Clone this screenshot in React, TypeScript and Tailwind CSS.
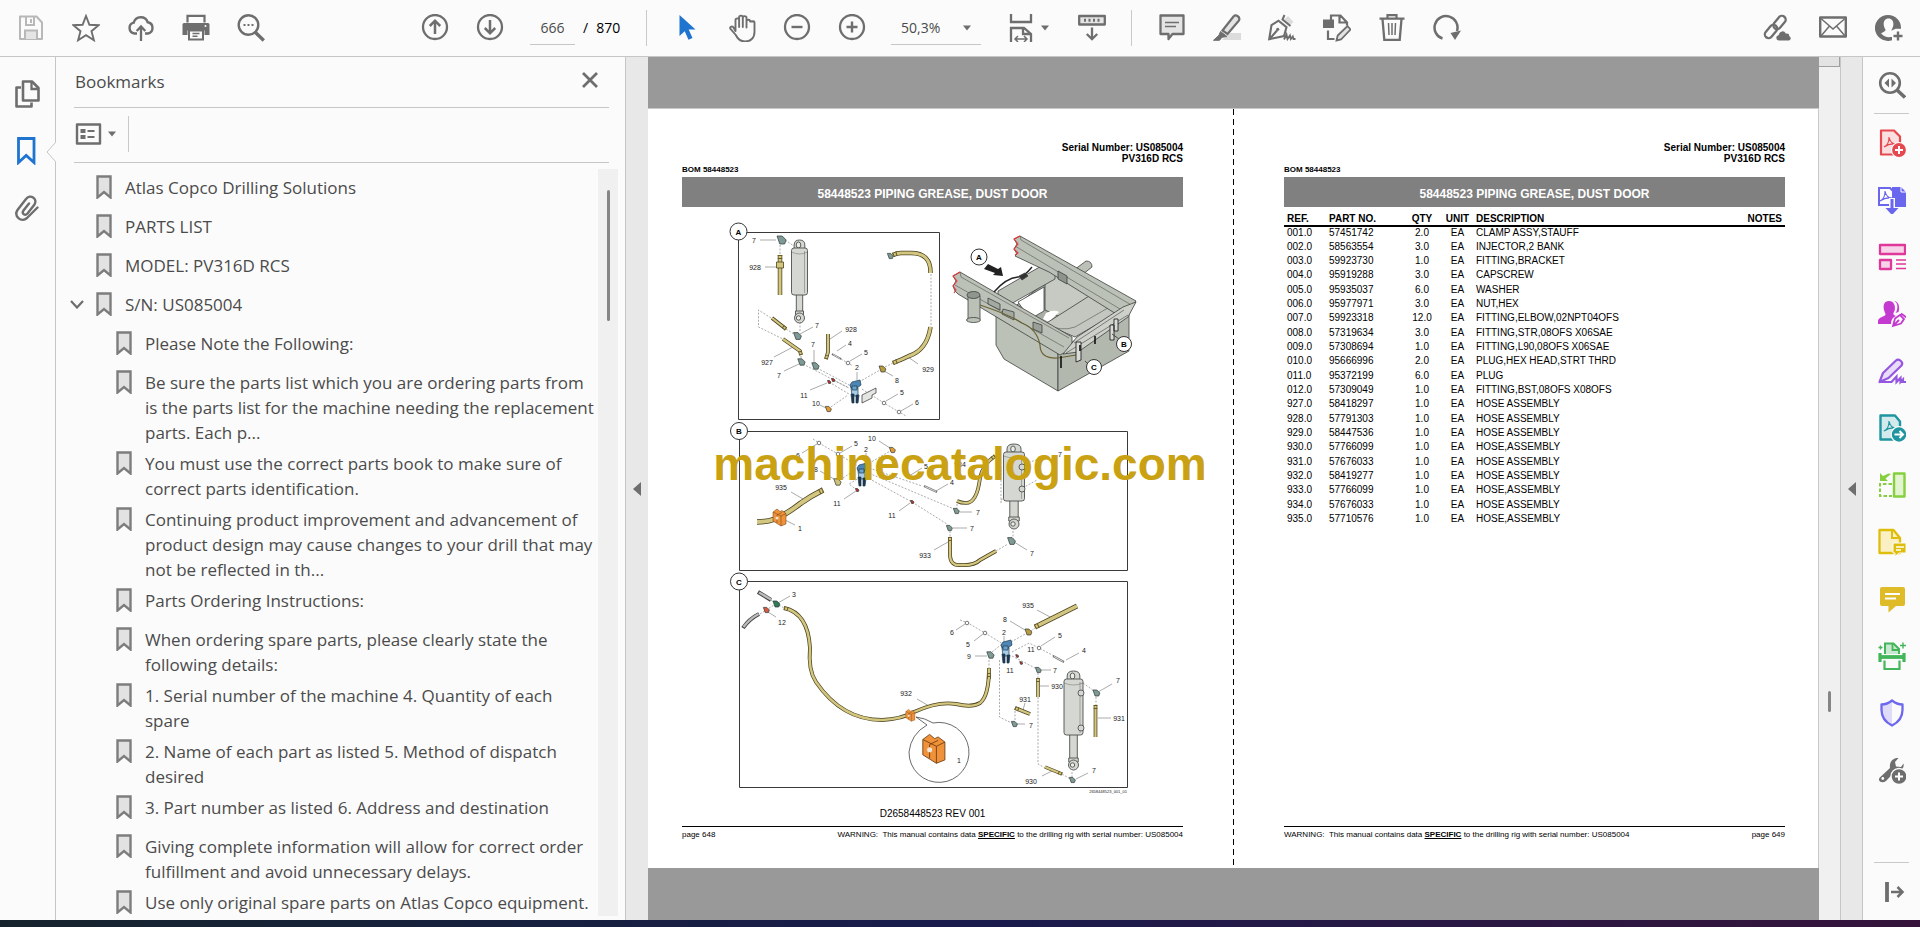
import type { ReactNode } from 'react';
import clsx from 'clsx';

const parts = [
  ['001.0', '57451742', '2.0', 'CLAMP ASSY,STAUFF'],
  ['002.0', '58563554', '3.0', 'INJECTOR,2 BANK'],
  ['003.0', '59923730', '1.0', 'FITTING,BRACKET'],
  ['004.0', '95919288', '3.0', 'CAPSCREW'],
  ['005.0', '95935037', '6.0', 'WASHER'],
  ['006.0', '95977971', '3.0', 'NUT,HEX'],
  ['007.0', '59923318', '12.0', 'FITTING,ELBOW,02NPT04OFS'],
  ['008.0', '57319634', '3.0', 'FITTING,STR,08OFS X06SAE'],
  ['009.0', '57308694', '1.0', 'FITTING,L90,08OFS X06SAE'],
  ['010.0', '95666996', '2.0', 'PLUG,HEX HEAD,STRT THRD'],
  ['011.0', '95372199', '6.0', 'PLUG'],
  ['012.0', '57309049', '1.0', 'FITTING,BST,08OFS X08OFS'],
  ['927.0', '58418297', '1.0', 'HOSE ASSEMBLY'],
  ['928.0', '57791303', '1.0', 'HOSE ASSEMBLY'],
  ['929.0', '58447536', '1.0', 'HOSE ASSEMBLY'],
  ['930.0', '57766099', '1.0', 'HOSE,ASSEMBLY'],
  ['931.0', '57676033', '1.0', 'HOSE ASSEMBLY'],
  ['932.0', '58419277', '1.0', 'HOSE ASSEMBLY'],
  ['933.0', '57766099', '1.0', 'HOSE,ASSEMBLY'],
  ['934.0', '57676033', '1.0', 'HOSE ASSEMBLY'],
  ['935.0', '57710576', '1.0', 'HOSE,ASSEMBLY'],
];

type Bookmark = { text: string; level: 0 | 1; open?: boolean };

const bookmarks: Bookmark[] = [
  { text: 'Atlas Copco Drilling Solutions', level: 0 },
  { text: 'PARTS LIST', level: 0 },
  { text: 'MODEL: PV316D RCS', level: 0 },
  { text: 'S/N: US085004', level: 0, open: true },
  { text: 'Please Note the Following:', level: 1 },
  { text: 'Be sure the parts list which you are ordering parts from is the parts list for the machine needing the replacement parts. Each p...', level: 1 },
  { text: 'You must use the correct parts book to make sure of correct parts identification.', level: 1 },
  { text: 'Continuing product improvement and advancement of product design may cause changes to your drill that may not be reflected in th...', level: 1 },
  { text: 'Parts Ordering Instructions:', level: 1 },
  { text: 'When ordering spare parts, please clearly state the following details:', level: 1 },
  { text: '1. Serial number of the machine 4. Quantity of each spare', level: 1 },
  { text: '2. Name of each part as listed 5. Method of dispatch desired', level: 1 },
  { text: '3. Part number as listed 6. Address and destination', level: 1 },
  { text: 'Giving complete information will allow for correct order fulfillment and avoid unnecessary delays.', level: 1 },
  { text: 'Use only original spare parts on Atlas Copco equipment.', level: 1 },
];

/* ---------- icons ---------- */

function Icon({ children, className }: { children: ReactNode; className?: string }) {
  return (
    <svg viewBox="0 0 28 28" className={clsx('size-7 shrink-0', className)} fill="none" stroke="currentColor" strokeWidth="2" aria-hidden="true">
      {children}
    </svg>
  );
}

const Caret = () => (
  <svg viewBox="0 0 8 6" className="h-1.5 w-2 shrink-0" aria-hidden="true">
    <path d="M0 .5h8L4 5.5z" fill="#6e6e6e" />
  </svg>
);

const SaveIcon = () => (
  <Icon className="text-[#b8b8b8]">
    <path d="M3 2.500h16.500l5.500 6v16.500H3z" strokeLinejoin="round" />
    <path d="M9 3v8h8V3M14 5v4" />
    <path d="M8 25v-8.500h12V25" fill="#e4e4e4" />
  </Icon>
);
const StarIcon = () => (
  <Icon>
    <path d="M14 2l3.400 8.800 9.300.4-7.200 6 2.400 9-7.900-5-7.900 5 2.400-9-7.200-6 9.300-.4z" strokeWidth="1.900" strokeLinejoin="miter" />
  </Icon>
);
const CloudIcon = () => (
  <Icon>
    <path d="M10 19.500H7.500a5.500 5.500 0 0 1-.8-10.800A7.300 7.300 0 0 1 20.700 8.300a5.700 5.700 0 0 1 .3 11.200h-3" strokeWidth="2.400" />
    <path d="M14 27V12.500M9.700 17l4.300-4.500 4.300 4.500" strokeWidth="2.300" />
  </Icon>
);
const PrintIcon = () => (
  <Icon>
    <path d="M5.500 8.500V1.800h17v6.700" strokeWidth="2.200" />
    <path d="M2 9h24a1.500 1.500 0 0 1 1.500 1.500V21h-5v-4.500h-17V21h-5V10.500A1.500 1.500 0 0 1 2 9z" fill="currentColor" stroke="none" />
    <path d="M7 16.500h14v9H7z" />
    <path d="M10.500 19.500h7M10.500 22.300h5" strokeWidth="1.400" />
    <circle cx="23.500" cy="12" r="1" fill="#fff" stroke="none" />
  </Icon>
);
const FindIcon = () => (
  <Icon>
    <circle cx="11.500" cy="11" r="9.800" strokeWidth="2.400" />
    <path d="M18.500 18.500l8.300 8" strokeWidth="3.400" />
    <path d="M6.500 11h2M10.500 11h2M14.500 11h2" strokeWidth="2.200" />
  </Icon>
);
const UpIcon = () => (
  <Icon>
    <circle cx="14" cy="13" r="12" strokeWidth="2.300" />
    <path d="M14 20V7M8.800 12L14 6.700l5.200 5.300" strokeWidth="2.500" />
  </Icon>
);
const DownIcon = () => (
  <Icon>
    <circle cx="14" cy="13" r="12" strokeWidth="2.300" />
    <path d="M14 6v13M8.800 14l5.200 5.300 5.200-5.300" strokeWidth="2.500" />
  </Icon>
);
const CursorIcon = () => (
  <Icon className="text-[#1f74cf]">
    <path d="M6.500 1v21l5.200-4.800 3.800 8.600 4-1.700-3.800-8.500h6.800z" fill="currentColor" stroke="none" />
  </Icon>
);
const HandIcon = () => (
  <Icon>
    <path d="M7.500 17V6.200a1.800 1.800 0 0 1 3.600 0V13 3.500a1.800 1.800 0 0 1 3.700 0V13 4a1.800 1.800 0 0 1 3.700 0v9.500-6a1.800 1.800 0 0 1 3.600 0l3.200-.3c.8 0 1.200.8 1.200 1.800v9c0 6-4 9.500-9.500 9.500-5.500 0-7.500-3-9.200-6.500L2.300 14.700c-.7-1.700 1.500-3 2.900-1.600z" strokeWidth="1.900" strokeLinejoin="round" />
  </Icon>
);
const MinusIcon = () => (
  <Icon>
    <circle cx="14" cy="13" r="12" strokeWidth="2.300" />
    <path d="M8.500 13h11" strokeWidth="2.400" />
  </Icon>
);
const PlusIcon = () => (
  <Icon>
    <circle cx="14" cy="13" r="12" strokeWidth="2.300" />
    <path d="M8.500 13h11M14 7.500v11" strokeWidth="2.400" />
  </Icon>
);
const FitIcon = () => (
  <Icon>
    <path d="M4 0v8h20V0" strokeWidth="2.300" />
    <path d="M4 28V14h13l7 6v8M16 14v6h7" strokeWidth="2.300" />
    <path d="M8 25h12M11 22l-3 3 3 3M17 22l3 3-3 3" strokeWidth="1.500" />
  </Icon>
);
const ScrollIcon = () => (
  <Icon>
    <path d="M1.200 2h25.600v8.500H1.200z" strokeWidth="2.300" strokeLinejoin="round" fill="#e4e4e4" />
    <path d="M6 6.200h2M10.500 6.200h2M15 6.200h2M19.500 6.200h2" strokeWidth="3" />
    <path d="M14 13.500v12M8.800 20l5.200 5.200 5.200-5.200" strokeWidth="2.300" />
  </Icon>
);
const CommentIcon = () => (
  <Icon>
    <path d="M2.500 1.500h23v18.500H14.500l-4 5v-5h-8z" fill="#e4e4e4" strokeWidth="2.300" strokeLinejoin="round" />
    <path d="M7 8.500h14M7 12.500h11" strokeWidth="1.500" />
  </Icon>
);
const HighlightIcon = () => (
  <Icon>
    <path d="M10 25l7-6h11v7H9z" fill="#dcdcdc" stroke="none" />
    <path d="M9.500 16.500L20.500 2.500c2.500-2.500 7 .5 5.500 4L14.500 20z" fill="#e4e4e4" strokeWidth="2.200" />
    <path d="M7.500 17.500l6.500 5-5 .8-2.500 3H.5l5.500-5z" fill="currentColor" strokeWidth="1" />
  </Icon>
);
const SignIcon = () => (
  <Icon>
    <path d="M15.500 6.500l4.500-4.500 5.500 6-4 3.500z" fill="#dcdcdc" stroke="none" />
    <path d="M16.500 1l-2 4.500 8 6.500" />
    <path d="M1.200 25.200l2.300-14 7-4.500 8 6.500-2.500 8.800zM2 24.500l7-8" strokeWidth="2.100" />
    <circle cx="9.700" cy="15.300" r="1.600" fill="currentColor" stroke="none" />
    <path d="M16 25.500l2.500-5 1 4.500 2.500-3.500.8 3.500 2-2.500.7 2.500h2" strokeWidth="1.800" />
  </Icon>
);
const EditIcon = () => (
  <Icon>
    <path d="M8 6V1.500h9.500l6.500 7v3M16.500 2v6.500H24" strokeWidth="2.200" />
    <path d="M0 5.500h11v8.500H0z" fill="currentColor" stroke="none" />
    <path d="M5 16.500V25h6.500" strokeWidth="2.200" />
    <path d="M13.500 26.500l1.200-5L24.500 12l3 3.500L18 25.500z" fill="#e4e4e4" strokeWidth="1.800" />
  </Icon>
);
const TrashIcon = () => (
  <Icon>
    <path d="M1.500 4.700h25M9.500 4.500V1.200h9v3.300" strokeWidth="2.200" />
    <path d="M4.500 5l1.800 20.800h15.400L23.500 5" strokeWidth="2.300" />
    <path d="M10.500 9l.5 12M14 9v12M17.500 9l-.5 12" strokeWidth="1.500" />
  </Icon>
);
const RotateIcon = () => (
  <Icon>
    <path d="M9.500 24.500A11.500 11.500 0 1 1 24 17" strokeWidth="2.500" />
    <path d="M17.500 19l10.500-2.500L22 26z" fill="currentColor" stroke="none" />
  </Icon>
);
const LinkCloudIcon = () => (
  <Icon>
    <rect x="-7.500" y="-3.800" width="15" height="7.600" rx="3.800" transform="translate(16.500 8.500) rotate(-50)" strokeWidth="2.300" />
    <rect x="-7.500" y="-3.800" width="15" height="7.600" rx="3.800" transform="translate(8 17.500) rotate(-50)" strokeWidth="2.300" />
    <path d="M15.500 27a3.200 3.200 0 0 1-.3-6.300c.8-4.500 6.300-5.200 8-1.700 2.500-.5 3.800 1 3.500 2.700 2.400 1 2 5.300-.8 5.300z" fill="currentColor" stroke="#fbfbfb" strokeWidth="1.200" />
  </Icon>
);
const MailIcon = () => (
  <Icon>
    <path d="M1.200 3.500h25.600v19H1.200z" strokeWidth="2.400" strokeLinejoin="round" />
    <path d="M2 4.500l12 10.500L26 4.500M2 22l8.500-10M26 22l-8.500-10" strokeWidth="1.500" />
  </Icon>
);
const UserIcon = () => (
  <Icon>
    <path fillRule="evenodd" d="M13 1a13 13 0 1 0 6 24.500v-2.500h-3l-5-4v-2h6c0-1 1.500-1.200 3.500-2.200H26A13 13 0 0 0 13 1z" fill="currentColor" stroke="none" />
    <path d="M13.500 4.500c-3.300 0-5 2.500-4.800 6 .2 2.500 1.200 4 1.800 5 .2 1.500-1 2.200-4.500 3.700 3.800 5 11.200 5 13 1.500v-1.500c-2-1-2.500-2-2.300-3.700.8-1.200 1.600-3 1.700-5 .2-3.500-1.700-6-4.900-6z" fill="#fbfbfb" stroke="none" />
    <path d="M17 17h11v11H17z" fill="#fbfbfb" stroke="none" />
    <path d="M18.500 22h9M23 17.500v9" strokeWidth="2.400" />
  </Icon>
);

const PagesIcon = () => (
  <Icon>
    <path d="M9 1.500h9l6.500 6.500v12.500H9z" strokeWidth="2.600" strokeLinejoin="round" />
    <path d="M17.500 2v7h7" strokeWidth="2.300" />
    <path d="M7 7.500H2.500v19h15V22.500" strokeWidth="2.600" strokeLinejoin="round" />
  </Icon>
);
const RibbonIcon = () => (
  <Icon className="text-[#1f74cf]">
    <path d="M4.500 1.500h15.500v24l-7.800-7-7.700 7z" strokeWidth="2.800" />
  </Icon>
);
const ClipIcon = () => (
  <Icon>
    <path d="M23.500 13.500L13 24c-5.500 5-13.500-1.500-9.500-8L12 5c4-5.500 12-.5 8.500 5.500l-7 9c-2.500 2.800-6 .2-4.200-2.700l5.700-7.300" strokeWidth="2.400" strokeLinecap="round" />
  </Icon>
);

const PdfSwirl = ({ x, y }: { x: number; y: number }) => (
  <path transform={`translate(${x} ${y})`} d="M0 11c3.500-1.500 5.200-6 5-10 1 5 3.500 7 7 7-4.500-.5-8.500.5-12 3z" strokeWidth="1.200" />
);

const tools: { label: string; icon: ReactNode }[] = [
  {
    label: 'Create PDF',
    icon: (
      <Icon className="text-[#e5484f]">
        <path d="M3 1.500h13l6 6v18H3z" fill="#fbdfe0" strokeWidth="2.200" strokeLinejoin="round" />
        <PdfSwirl x={6} y={7} />
        <circle cx="21" cy="21" r="7.500" fill="currentColor" stroke="#fbfbfb" strokeWidth="1.200" />
        <path d="M17 21h8M21 17v8" stroke="#fff" />
      </Icon>
    ),
  },
  {
    label: 'Combine Files',
    icon: (
      <Icon className="text-[#6a66ee]">
        <path d="M14 1h9l5 5v15H14z" fill="currentColor" stroke="none" />
        <path d="M23 1v5h5" stroke="#fff" strokeWidth="1" />
        <path d="M1 2h11l3 3v14H1z" fill="#fff" />
        <PdfSwirl x={2} y={4} />
        <path d="M14 12v12" stroke="#fbfbfb" strokeWidth="6" />
        <path d="M14 13v11" strokeWidth="3" />
        <path d="M7.500 22h13L14 29z" fill="currentColor" stroke="none" />
      </Icon>
    ),
  },
  {
    label: 'Organize Pages',
    icon: (
      <Icon className="text-[#e0389a]">
        <path d="M2 2h25v9H2zM2 17h11v9H2z" fill="#f6d3e8" strokeWidth="2.300" strokeLinejoin="round" />
        <path d="M18 17h10M18 21h10M18 25.500h10" strokeWidth="1.400" />
      </Icon>
    ),
  },
  {
    label: 'Request Signatures',
    icon: (
      <Icon className="text-[#c43ad0]">
        <path d="M11 1c-5 0-6 4-5 9 .5 2 1.500 3 1.500 4.500C7 17 0 17 0 21v3h13c0-4 1.500-6.500 5-8-3-1-3.200-2.500-1.500-5C18 6 16 1 11 1z" fill="currentColor" stroke="none" />
        <path d="M16 1c4 1 4.500 8 1.500 12l3-1c1.500-4 .5-11-4.500-11z" fill="currentColor" stroke="none" />
        <path d="M15 26l2-7.500 5-3.500 4 4-3 4.500zM15 26l6-6M23 13.500l5.500 4" fill="#fbfbfb" strokeWidth="1.800" />
      </Icon>
    ),
  },
  {
    label: 'Fill and Sign',
    icon: (
      <Icon className="text-[#9657e0]">
        <path d="M1.500 25l3.500-9L18 3.500c2.500-2.500 8 1.500 5.500 5L10.500 21z" fill="#e9dcf8" strokeWidth="2.200" strokeLinejoin="round" />
        <path d="M1.500 25h12l5-5.500v5.500l4-4v4l2.500-2.500v2.500h3" strokeWidth="2.200" />
      </Icon>
    ),
  },
  {
    label: 'Export PDF',
    icon: (
      <Icon className="text-[#1f95a0]">
        <path d="M2.500 1.500h14.500l5 6v18H2.500z" fill="#d2eaec" strokeWidth="2.400" strokeLinejoin="round" />
        <PdfSwirl x={6} y={6} />
        <circle cx="21" cy="20.500" r="7.800" fill="currentColor" stroke="#fbfbfb" strokeWidth="1.200" />
        <path d="M16.500 20.500h8M21.500 17l3.500 3.500-3.500 3.500" stroke="#fff" />
      </Icon>
    ),
  },
  {
    label: 'Compare Files',
    icon: (
      <Icon className="text-[#86cf3f]">
        <path d="M16 2.500h10.500v23H16z" fill="#e2f4d0" strokeWidth="2.400" strokeLinejoin="round" />
        <path d="M14 13H2v12h12" strokeDasharray="3.500 2" />
        <path d="M2 2v8h8L7.500 7.500 13 3l-2.500-.5L5 5z" fill="currentColor" stroke="none" />
      </Icon>
    ),
  },
  {
    label: 'Review',
    icon: (
      <Icon className="text-[#dfbd0b]">
        <path d="M1.500 2h14l6.500 8v15H1.500z" fill="#faf0c4" strokeWidth="2.300" strokeLinejoin="round" />
        <path d="M14 2v8h7" />
        <path d="M15 15h13v10h-7l-4 3.500V25h-2z" fill="currentColor" stroke="#fbfbfb" strokeWidth="1" />
        <path d="M18 19h8M18 22h5" stroke="#fff" strokeWidth="1.300" />
      </Icon>
    ),
  },
  {
    label: 'Comment',
    icon: (
      <Icon className="text-[#e0bb28]">
        <path d="M4 2h21a2 2 0 0 1 2 2v15a2 2 0 0 1-2 2h-7l-7.500 6.500V21H4a2 2 0 0 1-2-2V4a2 2 0 0 1 2-2z" fill="currentColor" stroke="none" />
        <path d="M7 9h15M7 13.500h11" stroke="#fff" strokeWidth="1.800" />
      </Icon>
    ),
  },
  {
    label: 'Scan and OCR',
    icon: (
      <Icon className="text-[#43b55a]">
        <path d="M7 12V1.500h8.500L21 7v5" fill="#c8e8d0" strokeWidth="2" />
        <path d="M14.500 1.500V8H21" strokeWidth="1.800" />
        <path d="M2 11v9M26 11v9" strokeWidth="3.200" />
        <path d="M1 15h26" strokeWidth="3.800" />
        <path d="M6.500 18.500V27h15v-8.500" strokeWidth="2.200" />
        <path d="M25 .5v6M22 3.500h6M2.500 3.500v4M.5 5.500h4" strokeWidth="1.400" />
      </Icon>
    ),
  },
  {
    label: 'Protect',
    icon: (
      <Icon className="text-[#6d68ee]">
        <path d="M14 1.500v24.500C7 23 3.500 18 3.500 11V5.500C8 5.500 11 4 14 1.500z" fill="#dedcf8" stroke="none" />
        <path d="M14 1.500c3 2.500 6 4 10.500 4V11c0 7-3.500 12-10.500 15.500C7 23 3.500 18 3.500 11V5.500C8 5.500 11 4 14 1.500z" strokeWidth="2.300" strokeLinejoin="round" />
      </Icon>
    ),
  },
  {
    label: 'More Tools',
    icon: (
      <Icon>
        <path d="M1.800 21.500L12 12c-1-6 3-10.500 8.500-10L17 6l1 4.500 5 .5 2.500-3.500c1 5-3 8.500-8.500 8l-9 9.500c-4.500 3-9-.5-6.200-3.500z" fill="currentColor" stroke="none" />
        <circle cx="4.800" cy="22.500" r="1.400" fill="#fff" stroke="none" />
        <circle cx="21" cy="20.500" r="8" fill="currentColor" stroke="#fbfbfb" strokeWidth="1.400" />
        <path d="M17 20.500h8M21 16.500v8" stroke="#fff" />
      </Icon>
    ),
  },
];

/* ---------- toolbar ---------- */

function ToolButton({ label, children }: { label: string; children: ReactNode }) {
  return (
    <button type="button" aria-label={label} className="flex h-11 w-[55px] items-center justify-center">
      {children}
    </button>
  );
}

const Divider = () => <div className="h-9 w-px bg-[#c9c9c9]" />;

function Toolbar() {
  return (
    <header className="flex h-[57px] shrink-0 items-center border-b border-[#c6c6c6] bg-[#fbfbfb] pl-[3px] pr-1 text-[#6e6e6e]">
      <div className="flex">
        <ToolButton label="Save"><SaveIcon /></ToolButton>
        <ToolButton label="Star"><StarIcon /></ToolButton>
        <ToolButton label="Upload"><CloudIcon /></ToolButton>
        <ToolButton label="Print"><PrintIcon /></ToolButton>
        <ToolButton label="Find"><FindIcon /></ToolButton>
      </div>

      <div className="ml-[129px] flex items-center">
        <ToolButton label="Previous page"><UpIcon /></ToolButton>
        <ToolButton label="Next page"><DownIcon /></ToolButton>
        <input
          aria-label="Page number"
          defaultValue="666"
          className="ml-[13px] h-[34px] w-[45px] border-b border-[#c6c6c6] bg-transparent text-center text-sm text-[#4b4b4b] outline-none"
        />
        <span className="ml-2 flex w-[63px] gap-2 text-sm text-black">
          <span>/</span>
          <span>870</span>
        </span>
      </div>
      <Divider />

      <div className="ml-3 flex items-center">
        <ToolButton label="Select"><CursorIcon /></ToolButton>
        <ToolButton label="Pan"><HandIcon /></ToolButton>
        <ToolButton label="Zoom out"><MinusIcon /></ToolButton>
        <ToolButton label="Zoom in"><PlusIcon /></ToolButton>
        <div className="ml-3 flex w-[90px] items-center border-b border-[#c6c6c6] pr-2.5">
          <select aria-label="Zoom level" className="h-[33px] flex-1 appearance-none bg-transparent pl-2.5 text-sm text-[#4b4b4b] outline-none">
            <option>50,3%</option>
          </select>
          <Caret />
        </div>
        <button type="button" aria-label="Page fit" className="ml-[26px] flex w-[45px] items-center gap-1.5">
          <FitIcon />
          <Caret />
        </button>
        <div className="ml-3">
          <ToolButton label="Scrolling"><ScrollIcon /></ToolButton>
        </div>
      </div>

      <div className="ml-3 flex items-center gap-3">
        <Divider />
        <div className="flex">
          <ToolButton label="Comment"><CommentIcon /></ToolButton>
          <ToolButton label="Highlight"><HighlightIcon /></ToolButton>
          <ToolButton label="Sign"><SignIcon /></ToolButton>
          <ToolButton label="Edit"><EditIcon /></ToolButton>
          <ToolButton label="Delete"><TrashIcon /></ToolButton>
          <ToolButton label="Rotate"><RotateIcon /></ToolButton>
        </div>
      </div>

      <div className="ml-auto flex gap-px">
        <ToolButton label="Share link"><LinkCloudIcon /></ToolButton>
        <ToolButton label="Send by email"><MailIcon /></ToolButton>
        <ToolButton label="Account"><UserIcon /></ToolButton>
      </div>
    </header>
  );
}

/* ---------- left side ---------- */

function LeftRail() {
  return (
    <nav className="relative flex w-14 shrink-0 flex-col border-r border-[#c6c6c6] bg-[#fbfbfb] pt-2 text-[#6e6e6e]">
      {[
        ['Pages', <PagesIcon />],
        ['Bookmarks', <RibbonIcon />],
        ['Attachments', <ClipIcon />],
      ].map(([label, icon]) => (
        <button key={label as string} type="button" aria-label={label as string} className="flex h-[57px] w-full items-center justify-center">
          {icon}
        </button>
      ))}
      {/* pointer towards the open panel */}
      <svg viewBox="0 0 10 20" className="absolute -right-px top-[85px] h-5 w-2.5" aria-hidden="true">
        <path d="M10 0L1 10l9 10z" fill="#fbfbfb" />
        <path d="M9.500 0v.5L1 10l8.500 9.500v.5" fill="none" stroke="#c6c6c6" />
      </svg>
    </nav>
  );
}

function BookmarkRow({ item }: { item: Bookmark }) {
  return (
    <li className={clsx('flex min-h-[39px] pb-1.5', item.level === 1 && 'pl-5')}>
      <span className="flex w-10 items-center self-start pt-2 pl-3.5">
        {item.open && (
          <svg viewBox="0 0 14 9" className="h-[9px] w-3.5" fill="none" stroke="#6e6e6e" strokeWidth="2.200" aria-hidden="true">
            <path d="M1 1l6 6.500L13 1" />
          </svg>
        )}
      </span>
      <svg viewBox="0 0 16 24" className="h-6 w-4 shrink-0" aria-hidden="true">
        <path d="M1.500 1.500h13v21L8 17l-6.500 5.500z" fill="#e2e2e2" stroke="#7d7d7d" strokeWidth="2.400" />
      </svg>
      <a href="#" className="ml-[13px] min-w-0 flex-1 text-[17px] leading-[25px] text-[#4b4b4b]">
        {item.text}
      </a>
    </li>
  );
}

function BookmarksPanel() {
  return (
    <aside className="flex w-[570px] shrink-0 flex-col border-r border-[#c6c6c6] bg-[#fbfbfb]">
      <div className="ml-[18px] mr-4 flex h-[51px] shrink-0 items-center justify-between border-b border-[#c6c6c6] pr-2.5 pl-px">
        <h2 className="text-[17px] text-[#4b4b4b]">Bookmarks</h2>
        <button type="button" aria-label="Close panel" className="pb-1">
          <svg viewBox="0 0 18 18" className="size-[18px]" stroke="#6e6e6e" strokeWidth="2.800" aria-hidden="true">
            <path d="M2 2l14 14M16 2L2 16" />
          </svg>
        </button>
      </div>
      <div className="ml-[18px] mr-4 flex h-[55px] shrink-0 items-center border-b border-[#c6c6c6] pb-0.5">
        <button type="button" aria-label="Options" className="flex items-center gap-1.5 pr-3">
          <svg viewBox="0 0 28 24" className="h-6 w-7" fill="none" stroke="#6e6e6e" strokeWidth="2.400" aria-hidden="true">
            <path d="M3 2.500h23v19H3z" strokeLinejoin="round" />
            <path d="M13.500 9h7M13.500 15h7" strokeWidth="2" />
            <path d="M6.500 9h5M6.500 15h5" strokeWidth="4" />
          </svg>
          <Caret />
        </button>
        <Divider />
      </div>
      <div className="flex min-h-0 flex-1 pt-1.5 pb-1">
        <ul className="min-w-0 flex-1 overflow-hidden pt-1.5">
          {bookmarks.map((item) => (
            <BookmarkRow key={item.text} item={item} />
          ))}
        </ul>
        <div className="mr-[7px] w-5 shrink-0 bg-[#f0f0f0] pt-[21px]">
          <div className="mx-auto h-[131px] w-[3px] rounded-full bg-[#858585]" />
        </div>
      </div>
    </aside>
  );
}

function CollapseStrip({ label, className }: { label: string; className?: string }) {
  return (
    <button type="button" aria-label={label} className={clsx('flex w-[22px] shrink-0 items-center justify-center bg-[#e8e8e8]', className)}>
      <svg viewBox="0 0 8 14" className="h-3.5 w-2" aria-hidden="true">
        <path d="M8 0v14L0 7z" fill="#6e6e6e" />
      </svg>
    </button>
  );
}

/* ---------- drawing ---------- */

function Hose({ d, w = 3, end }: { d: string; w?: number; end?: boolean }) {
  return (
    <g fill="none" strokeLinejoin="round">
      <path d={d} stroke="#4a421c" strokeWidth={w + 1.5} />
      <path d={d} stroke="#d3c680" strokeWidth={w} />
      {end && <path d={d} stroke="#6b5c22" strokeWidth={w + 1.5} strokeDasharray="1 2 1 300" />}
    </g>
  );
}

function Cylinder({ x, y, w, body, rod }: { x: number; y: number; w: number; body: number; rod: number }) {
  return (
    <g transform={`translate(${x} ${y})`} fill="#d5d8d2" stroke="#4c4f4b" strokeWidth=".9">
      <path d={`M${-w / 3} 9V3q0-5 ${w / 3} -5t${w / 3} 5V9z`} />
      <ellipse cx="-1" cy="3" rx="2.300" ry="3" fill="#eceeea" />
      <path d={`M${-w / 5} ${body}V${body + rod}H${w / 5}V${body}z`} />
      <path d={`M${-w / 4} ${body + rod - 4}h${w / 2}v4h${-w / 2}z`} />
      <rect x={-w / 2} y="6" width={w} height={body - 4} rx="2.500" />
      <path d={`M${-w / 2} 10q${w / 2} 4 ${w} 0`} fill="none" strokeWidth=".4" />
      <path d={`M${w / 2 - 3} 9v${body - 9}`} fill="none" strokeWidth=".4" />
      <circle cx="0" cy={body + rod + 3} r="5" />
      <circle cx="-1" cy={body + rod + 3} r="2.200" fill="#eceeea" />
    </g>
  );
}

function Injector({ x, y }: { x: number; y: number }) {
  return (
    <g transform={`translate(${x} ${y})`} stroke="#1d3a52" strokeWidth=".7">
      <path d="M-5 3l2-3 8-2 1 5-4 3h-6z" fill="#4d86b5" />
      <path d="M-4 6h7v8h-6z" fill="#a9cce6" />
      <path d="M-3 4h5v4h-5z" fill="#6ba2cc" />
      <path d="M-4 12h3v9h-2zM1 13h3l-1 8h-2z" fill="#1e3550" />
    </g>
  );
}

/* elbow fittings, plugs, washers */
const Dot = ({ x, y, c = '#7f9a94', r = 2.6 }: { x: number; y: number; c?: string; r?: number }) => (
  <g transform={`translate(${x} ${y})`} fill={c} stroke="#2e3836" strokeWidth=".7">
    <path d={`M${-r} ${-r}h${r * 1.3}l${r} ${r}-${r * 0.4} ${r}h-${r * 1.2}z`} />
  </g>
);
const Washer = ({ x, y }: { x: number; y: number }) => <circle cx={x} cy={y} r="1.800" fill="#fff" stroke="#555" strokeWidth=".8" />;

const Clamp = ({ x, y, s = 1 }: { x: number; y: number; s?: number }) => (
  <g transform={`translate(${x} ${y}) scale(${s})`} fill="#f0923a" stroke="#6b3a10" strokeWidth=".5">
    <path d="M-6 -5l4-3 3 2.500 2-1 4 3V7L2 9-6 4z" />
    <path d="M-2 -2l5-2.500M-2 -2v8M2 9V-1l5-2.500M-6-5l8 4" fill="none" />
    <circle cx="-2" cy="1" r="1.500" fill="#f4e6d8" stroke="none" />
  </g>
);

const Bubble = ({ x, y, t, r = 8 }: { x: number; y: number; t: string; r?: number }) => (
  <g>
    <circle cx={x} cy={y} r={r} fill="#fff" stroke="#333" strokeWidth="1" />
    <text x={x} y={y + 3} fontSize="8" fontWeight="bold">{t}</text>
  </g>
);

const callouts: [number, number, string][] = [
  [754, 243, '7'], [755, 270, '928'], [817, 328, '7'], [851, 332, '928'], [813, 347, '7'], [850, 346, '4'],
  [866, 355, '5'], [857, 370, '2'], [767, 365, '927'], [779, 378, '7'], [804, 398, '11'], [816, 406, '10'],
  [897, 383, '8'], [902, 395, '5'], [917, 405, '6'], [928, 372, '929'],
  [798, 458, '6'], [856, 446, '5'], [866, 452, '2'], [872, 441, '10'], [816, 472, '8'], [781, 490, '935'],
  [800, 531, '1'], [837, 506, '11'], [892, 518, '11'], [952, 485, '4'], [926, 469, '5'], [960, 467, '934'],
  [978, 515, '7'], [972, 531, '7'], [925, 558, '933'], [1032, 556, '7'], [1060, 457, '7'],
  [794, 597, '3'], [782, 625, '12'], [906, 696, '932'], [959, 763, '1'], [952, 635, '6'], [968, 647, '5'],
  [969, 659, '9'], [1004, 635, '2'], [1005, 622, '8'], [1028, 608, '935'], [1060, 638, '5'], [1084, 653, '4'],
  [1031, 652, '11'], [1010, 673, '11'], [1055, 673, '7'], [1057, 689, '930'], [1025, 702, '931'], [1031, 728, '7'],
  [1118, 683, '7'], [1119, 721, '931'], [1031, 784, '930'], [1094, 773, '7'],
];

function Assembly() {
  return (
    <g stroke="#3c403c" strokeWidth=".8" fill="#bcc1b8" strokeLinejoin="round">
      {/* hopper */}
      <path d="M1054 275l46 14-52 36-36-16z" fill="#a9aea6" />
      <path d="M1018 302l26-15v24l-14 8z" fill="#fff" />
      <path d="M1045 270v40l26 12 28-28z" fill="#c6cac2" />
      <path d="M1046 313q8-4 13-1l-10 10-6-3z" fill="#fff" stroke="none" />
      <path d="M996 313v32l8 14 54 32V353l-62-42z" />
      <path d="M1058 353v38l71-40v-40l-8-6z" fill="#b3b8af" />
      {/* top plate */}
      <path d="M1045 324l52-33 30 16-52 30z" fill="#c3c7bf" />
      <path d="M1045 324q16 8 30 3l38-22-12-12" fill="none" strokeWidth=".5" />
      {/* cross tube and beams */}
      <path d="M1070 273l16-12q6 0 6 6l-14 11z" />
      <path d="M998 291l52-30 5 3v15l-46 26-11-6z" />
      <path d="M1020 236l-6 3 3 5-3 5 3 5-2 2 34 16 72 45 6-2 9-14z" />
      <path d="M1015 246l110 66M1020 236l1 4 112 66" fill="none" strokeWidth=".5" />
      <path d="M1058 271l9 5v8l-9-5z" fill="#8d948b" />
      <path d="M960 272l-7 4 3 5-3 5 2 5 3 3 102 61 12-6v-12z" />
      <path d="M955 285l109 62M960 272l1 5 108 61" fill="none" strokeWidth=".5" />
      <path d="M1063 354l14-17 46-30 13-5-8 15-50 35z" fill="#cdd1ca" />
      <path d="M1066 353l62-38M1074 343l50-33" fill="none" strokeWidth=".6" />
      <path d="M988 298l12 6v6l-12-6zM1003 309l11 3v8l-12-6z" fill="#a4aaa2" />
      {/* broken beam ends */}
      <path d="M1020 236l-6 3 4 5-4 5 4 4-3 2M960 272l-7 4 4 5-4 5 3 4-2 3" fill="none" stroke="#e23b3b" strokeWidth="1.200" />
      {/* air cylinder and lines */}
      <path d="M968 296v23q6 5 12 0V296z" />
      <ellipse cx="973.500" cy="295" rx="6.500" ry="3.500" fill="#8f968e" />
      <ellipse cx="973.500" cy="320" rx="7" ry="2.500" />
      <path d="M980 305q30 10 42 18 15 6 18 22 0 14 18 13l18-3" fill="none" stroke="#6b6231" strokeWidth="1.200" />
      <path d="M994 292q12-14 24-15 6 0 14-10" fill="none" stroke="#222" strokeWidth="1.400" />
      <path d="M1019 276l6-3 3 3-6 4z" fill="#333" />
      <path d="M1076 342h5v18l-5 2zM1110 325h4v15h-4zM1114 319h4v12h-4z" fill="#dadcd8" stroke="#111" />
      <path d="M1061 356v12M1080 345v6M1095 336v8" fill="none" stroke="#111" strokeWidth="1.600" />
      <path d="M1033 322l9 3v8l-9-4z" fill="#9aa098" />
      <path d="M1085 361l5 5M1112 334l7 5" fill="none" strokeWidth=".9" />
      <path d="M984 269l4-5 10 5 3-2 2 9-10-1 2-2z" fill="#222" stroke="none" />
    </g>
  );
}

function Diagram() {
  return (
    <svg viewBox="682 215 501 585" className="mt-2 h-auto w-full" role="img" aria-label="Piping grease, dust door" fontFamily="Liberation Sans, Arial, sans-serif" textAnchor="middle" fontSize="7">
      <g fill="none" stroke="#3a3a3a" strokeWidth="1">
        <path d="M738.500 232.500h201v187h-201zM739.500 431.500h388v139h-388zM739.500 581.500h388v206h-388z" />
      </g>

      {/* dashed assembly lines */}
      <g fill="none" stroke="#888" strokeWidth=".7" strokeDasharray="2 1.500">
        <path d="M780 245v10M785 240l9 6M771 318l-12.500-8v17L783 339M800 322v10M786 329l8 5M801 356v4M803 364l46 24M817 368l34 18M841 359l7 4 5 3M833 380l16 8M829 382l20 12M828 409l20-14M859 382l21-12M885 367l8-4M931 274v54M862 389l22 14 15 9 7 4" />
        <path d="M813 439l6 4 19 11 20 12M866 465l26-15M840 480l18-12M857 490l-8-6 10-6M866 477l46 25 35 22M866 472l88 37M866 467l56 19M950 531v6M957 504v5M1001 503v-36M1001 500l36-20M996 551l12-7M1013 531v8M1022 465l25-9" />
        <path d="M771 600l4 3M760 614l14-9M779 605l5 3M960 620l8 3 17 10 18 11M992 652l10-8M1011 642l16-9M1031 631l5-4M1012 652l17-9 10 5 15 8M1012 656l25 13M999.500 660v57l12 6M1038 673v6M1038 697v67l7 4M1015 711v10M1062 774l10 6M1072 772v6M1083 683l11 8M1096 697v8M989 660v8" />
      </g>

      {/* leader lines */}
      <g fill="none" stroke="#555" strokeWidth=".5">
        <path d="M760 240h16M765 267h12M813 327l-13 7M842 331l-12 8M814 350v13M846 345l-9 6M862 354l-12 7M857 372v8M774 357l19-10M784 371l15-7M810 390l17-7M820 405l6 3M893 376l-9-5M898 394l-12 7M913 404l-12 7M918 364l-10-7" />
        <path d="M802 453l15-9M852 446l-12 7M866 453v8M879 441l11 7M820 471l14 8M791 492l12 7M795 525l-12-6M844 499l12-8M899 511l11-8M948 484l-12 7M922 468l-13 8M972 512h-12M967 528h-14M934 550l14-8M1027 550l-13-8" />
        <path d="M790 596l-12 7M776 617l-8-5M917 699l12 7M953 757l-8-4M956 630l9-6M974 641l9-7M975 656h12M1004 636v6M1010 621l15 9M1037 610l15 8M1055 637l-14 9M1079 653l-13 7M1051 670h-9M1049 686h-9M1025 703l-2 7M1025 724h-8M1112 684l-14 8M1111 718h-13M1042 776l12-6M1088 773l-12 6" />
      </g>

      {/* section A */}
      <Cylinder x={799.5} y={242} w={16} body={51} rod={22} />
      <Hose d="M780 255v40" end />
      <path d="M776.500 262h7v6h-7z" fill="#d3c680" stroke="#4a421c" strokeWidth=".8" />
      <Hose d="M786 329l-14-11" w={2.2} end />
      <Hose d="M801 355l-1-4-17-12" w={2.2} end />
      <Hose d="M826 359l2-7v-18" w={2.2} end />
      <Hose d="M893 255q4-2 8-2h10q20 0 19.500 20" end />
      <Hose d="M893 363q10-4 16-7 18-6 21.500-29" end />
      <Dot x={781} y={240} r={4} />
      <Dot x={890} y={256} />
      <Dot x={797} y={336} r={3.4} />
      <Dot x={801} y={362} r={3.2} />
      <Dot x={815} y={366} r={3.2} />
      <Dot x={833} y={380} c="#c0302a" r={1.5} />
      <Dot x={829} y={382} c="#c0302a" r={1.5} />
      <Dot x={828} y={409} c="#e39a2e" />
      <Dot x={882} y={369} c="#b99a3c" r={3} />
      <Injector x={855} y={382} />
      <path d="M862 395l14-7v5l-4 2v3l-10 5z" fill="#e4e6e2" stroke="#444" strokeWidth=".8" />
      <Washer x={848} y={363} />
      <Washer x={884} y={403} />
      <Washer x={899} y={412} />
      <path d="M832 354l9 5" stroke="#666" strokeWidth="2" />
      <path d="M833 354.500l7 4" stroke="#eee" strokeWidth=".8" />
      <Assembly />

      {/* section B */}
      <Cylinder x={1014} y={446} w={21} body={53} rod={22} />
      <circle cx="1022" cy="467" r="3" fill="#d5d8d2" stroke="#444" strokeWidth=".8" />
      <circle cx="1022" cy="489" r="3" fill="#d5d8d2" stroke="#444" strokeWidth=".8" />
      <Hose d="M823 490q-12 6-22 13-14 11-26 16-8 3-18 3" w={4} end />
      <Clamp x={779} y={517} />
      <Hose d="M995 456q-12 8-15 22-3 25-14 25-5 0-9-2" w={2.2} end />
      <Hose d="M950 537v17q0 12 10 11 14 1 20-5l16-9" w={2.4} end />
      <Dot x={956} y={511} />
      <Dot x={949} y={528} />
      <Dot x={1011} y={541} r={3.4} />
      <Dot x={857} y={490} c="#c0302a" r={1.5} />
      <Dot x={912} y={502} c="#c0302a" r={1.5} />
      <Dot x={892} y={450} c="#e39a2e" />
      <Dot x={837} y={482} c="#cfc078" r={3.2} />
      <Injector x={862} y={465} />
      <Washer x={819} y={443} />
      <Washer x={838} y={454} />
      <path d="M924 486l13 6" stroke="#777" strokeWidth="2" />
      <path d="M925 486.500l11 5" stroke="#eee" strokeWidth=".8" />

      {/* section C */}
      <Cylinder x={1073.5} y={673} w={19} body={60} rod={29} />
      <circle cx="1081" cy="693" r="3" fill="#d5d8d2" stroke="#444" strokeWidth=".8" />
      <circle cx="1081" cy="728" r="3" fill="#d5d8d2" stroke="#444" strokeWidth=".8" />
      <path d="M758 592l13 8M743 628q6-9 16-14" fill="none" stroke="#444" strokeWidth="4" />
      <path d="M759 592.500l12 7M743.500 627q6-8 15-13" fill="none" stroke="#b9bcb8" strokeWidth="2.400" />
      <Dot x={776} y={604} c="#2f7d57" r={3} />
      <Dot x={766} y={610} c="#d9583f" r={2.6} />
      <Hose d="M784 608q24 5 26 40-2 22 6 34 26 38 66 38 20-1 32-8 24-11 42-8 16 4 24-1 9-7 9-35" w={2.4} end />
      <Clamp x={910} y={715} s={0.7} />
      <path d="M916 717l11 8q-16 9-18 27a30 30 0 1 0 24-29q-8-5-17-6z" fill="#fff" stroke="#444" strokeWidth=".8" />
      <Clamp x={933} y={748} s={1.7} />
      <Hose d="M1035 627l42-21" w={3.6} end />
      <Hose d="M1038 678v19" w={2} end />
      <Hose d="M1015 708l15 6" w={2.4} end />
      <Hose d="M1095.500 705v32" w={2.2} end />
      <Hose d="M1062 774l-17-7" w={2} end />
      <Dot x={990} y={655} r={3.2} />
      <Hose d="M989 673v6" w={2.4} end />
      <Dot x={1028} y={632} c="#b99a3c" r={3} />
      <Dot x={1038} y={670} />
      <Dot x={1014} y={724} />
      <Dot x={1096} y={693} r={3} />
      <Dot x={1072} y={780} />
      <Dot x={1017} y={656} c="#c0302a" r={1.3} />
      <Dot x={1021} y={663} c="#c0302a" r={1.3} />
      <Injector x={1006} y={642} />
      <Washer x={967} y={623} />
      <Washer x={985} y={633} />
      <Washer x={1039} y={648} />
      <path d="M1053 656l11 6" stroke="#777" strokeWidth="2" />
      <path d="M1054 656.500l9 5" stroke="#eee" strokeWidth=".8" />

      <g fill="#222">
        {callouts.map(([x, y, t], i) => (
          <text key={i} x={x} y={y}>{t}</text>
        ))}
        <text x="1127" y="793" fontSize="4" textAnchor="end">2658448523_001_01</text>
      </g>
      <Bubble x={738.5} y={231.5} t="A" r={8.5} />
      <Bubble x={739} y={431} t="B" r={8.5} />
      <Bubble x={739} y={581.5} t="C" r={8.5} />
      <Bubble x={979} y={257} t="A" />
      <Bubble x={1124} y={344} t="B" r={7.5} />
      <Bubble x={1094} y={367} t="C" r={7.5} />
    </svg>
  );
}

/* ---------- document ---------- */

function PageHead() {
  return (
    <>
      <div className="text-right text-[10px] leading-[11px] font-bold">
        <p>Serial Number: US085004</p>
        <p>PV316D RCS</p>
      </div>
      <p className="text-[8px] leading-[12px] font-bold">BOM 58448523</p>
      <h1 className="mt-px flex h-[30px] shrink-0 items-center justify-center bg-[#808080] pt-1 text-[12px] font-bold text-white">
        58448523 PIPING GREASE, DUST DOOR
      </h1>
    </>
  );
}

const Warning = () => (
  <p>
    WARNING:&nbsp; This manual contains data <b className="underline">SPECIFIC</b> to the drilling rig with serial number: US085004
  </p>
);

function PartsTable() {
  return (
    <table className="w-full text-[10px] leading-[11px]">
      <thead>
        <tr className="h-[19px] border-b-2 border-black text-left font-bold">
          <th className="w-[45px] pt-1 pl-[3px]">REF.</th>
          <th className="w-[80px] pt-1">PART NO.</th>
          <th className="w-[26px] pt-1 text-center">QTY</th>
          <th className="w-[41px] pt-1 pl-1 text-center">UNIT</th>
          <th className="pt-1">DESCRIPTION</th>
          <th className="pt-1 pr-[3px] text-right">NOTES</th>
        </tr>
      </thead>
      <tbody className="align-top">
        {parts.map(([ref, no, qty, desc], i) => (
          <tr key={ref} className={i % 3 === 0 ? 'h-[15px]' : 'h-[14px]'}>
            <td className="pl-[3px]">{ref}</td>
            <td>{no}</td>
            <td className="text-center">{qty}</td>
            <td className="pl-1 text-center">EA</td>
            <td className="whitespace-nowrap">{desc}</td>
            <td />
          </tr>
        ))}
      </tbody>
    </table>
  );
}

function DocumentView() {
  return (
    <main className="flex min-w-0 flex-1 flex-col bg-[#999999] pt-[51px] pb-[52px] font-['Liberation_Sans',Arial,sans-serif] text-black">
      <div className="flex min-h-0 flex-1 border-t border-r border-[#c9c9c9] bg-white">
        <section className="flex flex-1 flex-col pt-[33px] pr-[50px] pb-[28px] pl-[34px]">
          <PageHead />
          <Diagram />
          <p className="mt-2 text-center text-[10px] leading-[12px]">D2658448523 REV 001</p>
          <footer className="mt-auto flex justify-between border-t border-black pt-0.5 text-[8px] leading-[11px]">
            <p>page 648</p>
            <Warning />
          </footer>
        </section>
        {/* fold between the two pages */}
        <div className="w-px bg-[repeating-linear-gradient(to_bottom,#000_0_6px,#fff_6px_10px)]" />
        <section className="flex flex-1 flex-col pt-[33px] pr-[33px] pb-[28px] pl-[50px]">
          <PageHead />
          <PartsTable />
          <footer className="mt-auto flex justify-between border-t border-black pt-0.5 text-[8px] leading-[11px]">
            <Warning />
            <p>page 649</p>
          </footer>
        </section>
      </div>
    </main>
  );
}

function ToolsRail() {
  return (
    <nav className="flex w-[57px] shrink-0 flex-col bg-[#fbfbfb] text-[#6e6e6e]">
      <button type="button" aria-label="Search tools" className="flex h-14 items-center justify-center">
        <Icon>
          <circle cx="12" cy="12" r="9.800" strokeWidth="2.600" />
          <path d="M19 19l8 7.500" strokeWidth="3.600" />
          <path d="M11 7.500v9L6.500 12zM13.500 7.500v9L18 12z" fill="currentColor" stroke="none" />
        </Icon>
      </button>
      <div className="mx-[11px] h-px bg-[#c9c9c9]" />
      {tools.map((tool) => (
        <button key={tool.label} type="button" aria-label={tool.label} className="flex h-[57px] items-center justify-center">
          {tool.icon}
        </button>
      ))}
      <div className="mx-[11px] mt-auto h-px bg-[#c9c9c9]" />
      <button type="button" aria-label="Collapse tools" className="flex h-[57px] items-center justify-center pl-1.5">
        <Icon>
          <path d="M6 4v20" strokeWidth="3.800" />
          <path d="M10 14h11M16.500 9l5 5-5 5" strokeWidth="2.500" />
        </Icon>
      </button>
    </nav>
  );
}

export default function App() {
  return (
    <div className="relative flex h-screen flex-col overflow-hidden font-['Open_Sans','Noto_Sans',sans-serif]">
      <Toolbar />
      <div className="flex min-h-0 flex-1">
        <LeftRail />
        <BookmarksPanel />
        <CollapseStrip label="Hide bookmarks" />
        <DocumentView />
        <div className="flex w-[22px] shrink-0 flex-col items-center border-r border-[#c6c6c6] bg-[#f0f0f0]">
          <div className="h-2.5 w-full border-r border-b border-[#a0a0a0] bg-[#e3e3e3]" />
          <div className="mt-[624px] h-[21px] w-[3px] rounded-full bg-[#858585]" />
        </div>
        <CollapseStrip label="Hide tools" className="border-r border-[#c6c6c6]" />
        <ToolsRail />
      </div>
      <div className="h-[7px] shrink-0 bg-linear-to-r from-[#17232c] via-[#181b4c] to-[#35133a]" />

      {/* watermark */}
      <div className="pointer-events-none absolute inset-0 flex items-center justify-center font-['Liberation_Sans',Arial,sans-serif] text-[46px] leading-none font-bold text-[#c9a113]">
        machinecatalogic.com
      </div>
    </div>
  );
}
